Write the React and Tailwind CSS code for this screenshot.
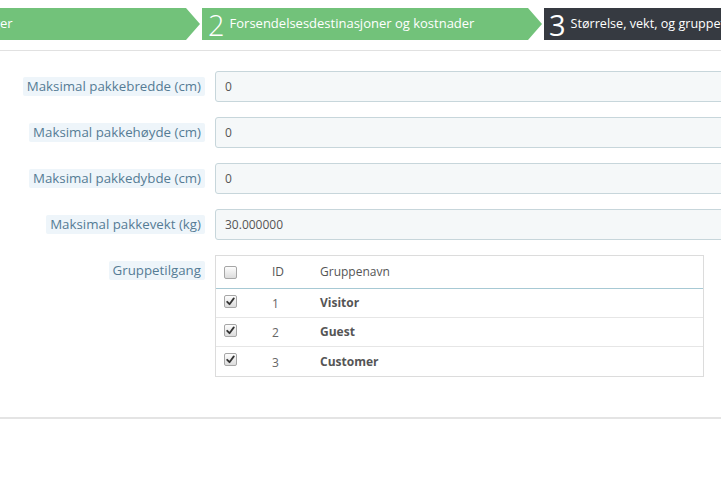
import React from 'react';

const fields = [
  { label: 'Maksimal pakkebredde (cm)', value: '0' },
  { label: 'Maksimal pakkehøyde (cm)', value: '0' },
  { label: 'Maksimal pakkedybde (cm)', value: '0' },
  { label: 'Maksimal pakkevekt (kg)', value: '30.000000' },
];

const groups = [
  { id: 1, name: 'Visitor' },
  { id: 2, name: 'Guest' },
  { id: 3, name: 'Customer' },
];

const Check = ({ checked }) => (
  <span className="w-[13px] h-[13px] rounded-[2px] border border-[#a6a6a6] bg-gradient-to-b from-[#fdfdfd] to-[#dcdcdc] flex items-center justify-center">
    {checked && (
      <svg width="9" height="9" viewBox="0 0 9 9">
        <path d="M1.2 4.8 L3.5 7.2 L7.8 1.4" fill="none" stroke="#333" strokeWidth="1.8" strokeLinecap="round" strokeLinejoin="round" />
      </svg>
    )}
  </span>
);

const Label = ({ children }) => (
  <span className="bg-[#eef5fa] text-[#557c95] text-[13.3px] leading-[19px] px-[4px] rounded-[2px]">{children}</span>
);

export default function App() {
  return (
    <div className="w-[721px] h-[478px] overflow-hidden bg-white font-['Open_Sans',sans-serif]">
      {/* Steps */}
      <div className="pt-[8px] pb-[10px] border-b border-[#e1e1e1]">
        <div className="flex h-[32px] text-white text-[13px]">
          <div className="flex">
            <div className="w-[186px] bg-[#72c27a] flex items-center overflow-hidden">
              <span className="-ml-[7px] whitespace-nowrap">ger</span>
            </div>
            <div className="w-0 h-0 border-l-[14px] border-l-[#72c27a] border-y-[16px] border-y-transparent" />
          </div>
          <div className="flex ml-[2px]">
            <div className="w-[326px] bg-[#72c27a] flex items-center pl-[6px] gap-[5px] whitespace-nowrap">
              <span className="text-[29px] font-light leading-none">2</span>
              <span>Forsendelsesdestinasjoner og kostnader</span>
            </div>
            <div className="w-0 h-0 border-l-[14px] border-l-[#72c27a] border-y-[16px] border-y-transparent" />
          </div>
          <div className="flex-1 ml-[2px] bg-[#363a41] flex items-center pl-[5px] gap-[5px] whitespace-nowrap overflow-hidden">
            <span className="text-[29px] font-normal leading-none">3</span>
            <span className="text-[12.6px]">Størrelse, vekt, og gruppetilgang</span>
          </div>
        </div>
      </div>

      {/* Form */}
      <div className="pt-[20px] pb-[40px] border-b-2 border-[#e4e4e4]">
        <div className="flex flex-col gap-[15px]">
          {fields.map((f) => (
            <div key={f.label} className="flex items-center">
              <div className="w-[205px] flex justify-end shrink-0">
                <Label>{f.label}</Label>
              </div>
              <div className="ml-[10px] w-[540px] shrink-0 h-[31px] bg-[#f5f8f9] border border-[#c7d6db] rounded-[3px] flex items-center px-[9px] text-[12px] text-[#555]">
                {f.value}
              </div>
            </div>
          ))}
          <div className="flex items-start">
            <div className="w-[205px] flex justify-end shrink-0 pt-[6px]">
              <Label>Gruppetilgang</Label>
            </div>
            <div className="ml-[10px] w-[489px] shrink-0 border border-[#dcdcdc] text-[12px] text-[#555]">
              <div className="flex items-center h-[33px] border-b border-[#a7c9d4]">
                <div className="w-[56px] pl-[8px]"><Check /></div>
                <div className="w-[48px]">ID</div>
                <div>Gruppenavn</div>
              </div>
              {groups.map((g, i) => (
                <div key={g.id} className={`flex items-center h-[29px] ${i < groups.length - 1 ? 'border-b border-[#e6e6e6]' : ''}`}>
                  <div className="w-[56px] pl-[8px] -mt-[4px]"><Check checked /></div>
                  <div className="w-[48px] pt-[2px] text-[#666]">{g.id}</div>
                  <div className="font-bold">{g.name}</div>
                </div>
              ))}
            </div>
          </div>
        </div>
      </div>
    </div>
  );
}
